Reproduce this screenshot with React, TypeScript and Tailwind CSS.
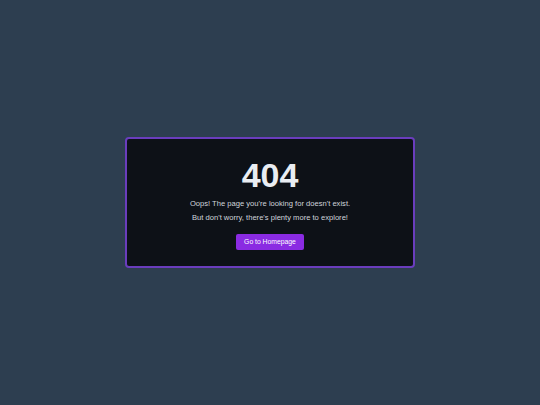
export default function App() {
  return (
    <div className="flex min-h-screen items-center justify-center bg-[#2d3e50] font-['Liberation_Sans',Arial,sans-serif]">
      <div className="flex w-[290px] flex-col items-center rounded-[4px] border-2 border-[#6a3dbd] bg-[#0d1117] px-4 pb-[16px] pt-[19px]">
        <h1 className="text-[34px] font-bold leading-none text-[#e9edf2]">404</h1>
        <p className="mt-[5px] text-[7.6px] leading-[14px] text-[#d0d5dc]">
          Oops! The page you're looking for doesn't exist.
        </p>
        <p className="text-[7.6px] leading-[14px] text-[#d0d5dc]">
          But don't worry, there's plenty more to explore!
        </p>
        <button className="mt-[9px] h-4 rounded-[2px] bg-[#8a2be2] px-[8.5px] text-[6.8px] text-white">
          Go to Homepage
        </button>
      </div>
    </div>
  );
}
